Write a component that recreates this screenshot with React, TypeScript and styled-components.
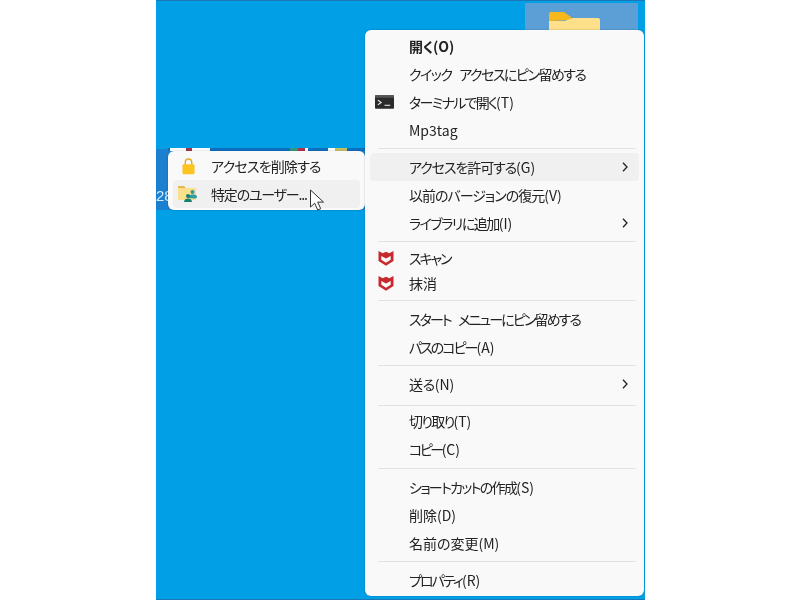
import React from "react";
import styled, { createGlobalStyle } from "styled-components";

const Global = createGlobalStyle`
  html, body { margin: 0; padding: 0; background: #fff; }
  body { font-family: "Noto Sans CJK JP", "Noto Sans", sans-serif; }
`;

const Page = styled.div`
  width: 800px;
  height: 600px;
  display: flex;
  justify-content: center;
  overflow: hidden;
  padding-left: 1px;
  box-sizing: border-box;
`;

const Desktop = styled.div`
  position: relative;
  width: 489px;
  height: 600px;
  background: #009fe6;
  border-top: 1px solid #1a78b8;
  border-bottom: 1px solid #1a78b8;
  box-sizing: border-box;
  display: flex;
  flex-direction: column;
  overflow: hidden;
  filter: blur(0.3px);
`;

const FolderTile = styled.div`
  align-self: flex-end;
  margin: 2px 7px 0 0;
  width: 113px;
  height: 30px;
  flex: none;
  background: #5c9fd6;
  display: flex;
  padding: 9px 0 0 24px;
  box-sizing: border-box;
`;

const Band = styled.div`
  margin-top: 116px;
  width: 210px;
  height: 61px;
  flex: none;
  background: #1b80cf;
  color: #d5ecff;
  font: 15px "Liberation Sans", sans-serif;
  display: flex;
  align-items: flex-end;
  padding: 0 0 6px 0;
  box-sizing: border-box;
`;

const Strip = styled.div`
  position: absolute;
  left: 12px;
  top: 147px;
  width: 197px;
  height: 3px;
  background: #0f6fc0;
  display: flex;
`;

const StripSeg = styled.span<{ $w: number; $c: string }>`
  width: ${(p) => p.$w}px;
  background: ${(p) => p.$c};
`;

const Menu = styled.div`
  position: absolute;
  background: #f9f9f9;
  border-radius: 6px;
  box-shadow: 0 0 2px rgba(0, 0, 0, 0.25);
  box-sizing: border-box;
  color: #222;
  font-size: 14px;
  font-feature-settings: "palt" 1;
  display: flex;
  flex-direction: column;
`;

const MainMenu = styled(Menu)`
  left: 209px;
  top: 29px;
  width: 279px;
  height: 566px;
  padding: 2px 5px;
`;

const SubMenu = styled(Menu)`
  left: 12px;
  top: 150px;
  width: 197px;
  height: 59px;
  padding: 1px 5px;
`;

const Row = styled.div<{ $h?: number; $active?: boolean; $bold?: boolean; $sub?: boolean; $track?: number; $word?: number }>`
  height: ${(p) => p.$h ?? 28}px;
  flex: none;
  display: flex;
  align-items: center;
  border-radius: 4px;
  padding-left: ${(p) => (p.$sub ? 38 : 39)}px;
  background: ${(p) => (p.$active ? "#f0f0f0" : "transparent")};
  font-weight: ${(p) => (p.$bold ? 700 : 400)};
  letter-spacing: ${(p) => p.$track ?? 0}px;
  word-spacing: ${(p) => p.$word ?? 0}px;
  white-space: pre;
`;

const Key = styled.span`
  letter-spacing: 0;
`;

const IconSlot = styled.span<{ $x?: number; $sub?: boolean }>`
  width: ${(p) => (p.$sub ? 34 : 35)}px;
  margin-left: ${(p) => (p.$sub ? -34 : -35)}px;
  flex: none;
  display: flex;
  align-items: center;
  padding-left: ${(p) => p.$x ?? 0}px;
  box-sizing: border-box;
`;

const Sep = styled.div<{ $top?: number; $bottom?: number }>`
  height: 1px;
  flex: none;
  margin: ${(p) => p.$top ?? 4}px 3px ${(p) => p.$bottom ?? 4}px 8px;
  background: #e2e2e2;
`;

const Chevron = styled.svg`
  margin-left: auto;
  margin-right: 11px;
  flex: none;
`;

const Cursor = styled.svg`
  position: absolute;
  left: 153px;
  top: 188px;
`;

const Folder = () => (
  <svg width="52" height="21" viewBox="0 0 52 21">
    <path d="M0 2a2 2 0 0 1 2-2h13l7 5v3l-22 1z" fill="#f6b81a" />
    <path d="M0 21V9h16l6-2.500 1-.5h26a2 2 0 0 1 2 2v13z" fill="#fee08b" />
  </svg>
);

const Terminal = () => (
  <svg width="19" height="14" viewBox="0 0 20 14">
    <rect width="20" height="14" rx="1" fill="#2b2b2b" />
    <rect width="20" height="2.500" fill="#555" />
    <path d="M3 5l3.500 2.500L3 10" fill="none" stroke="#eee" strokeWidth="1.200" />
    <path d="M10 10.500h6" stroke="#ddd" strokeWidth="1.200" />
  </svg>
);

const Shield = () => (
  <svg width="16" height="16" viewBox="0 0 16 16">
    <path
      fillRule="evenodd"
      d="M.5 1 4.800 3.200 8 1.800l3.200 1.400L15.500 1V11L8 15.700.5 11zM3.300 5.900V9.700L8 12.700l4.700-3V5.900L8 8.400z"
      fill="#c62a2f"
    />
  </svg>
);

const Lock = () => (
  <svg width="13" height="18" viewBox="0 0 14 18">
    <path d="M3.500 8V5a3.500 3.500 0 0 1 7 0v3" fill="none" stroke="#e0ad2a" strokeWidth="1.500" />
    <rect x="0.500" y="7" width="13" height="11" rx="1.500" fill="#fdc321" />
  </svg>
);

const ShareFolder = () => (
  <svg width="20" height="18" viewBox="0 0 20 18">
    <path d="M0 2a1 1 0 0 1 1-1h5l2 2h-8z" fill="#e9b649" />
    <path d="M0 3h17a1 1 0 0 1 1 1v11H1a1 1 0 0 1-1-1z" fill="#fadf8c" />
    <circle cx="14.500" cy="7" r="2" fill="#2d9ca6" />
    <path d="M10 13c0-2.500 2-3.500 4.500-3.500S19 10 19 12c0 1-1.500 1.500-3 1.500z" fill="#2d9ca6" />
    <circle cx="10" cy="11" r="2" fill="#17806f" />
    <path d="M6 17c0-2.500 2-3.500 4-3.500s4 1 4 3.500z" fill="#17806f" />
  </svg>
);

const Arrow = () => (
  <Chevron width="6" height="10" viewBox="0 0 6 10">
    <path d="M1 .8 5 5 1 9.200" fill="none" stroke="#222" strokeWidth="1.300" />
  </Chevron>
);

const segments = [
  { w: 2, c: "#0f6fc0" },
  { w: 16, c: "#ffffff" },
  { w: 6, c: "#a0344a" },
  { w: 18, c: "#ffffff" },
  { w: 80, c: "#0f6fc0" },
  { w: 8, c: "#2f9a80" },
  { w: 7, c: "#b5304a" },
  { w: 3, c: "#ffffff" },
  { w: 20, c: "#0f6fc0" },
  { w: 7, c: "#ffffff" },
  { w: 12, c: "#c8c060" },
  { w: 18, c: "#0f6fc0" },
];

export default function App() {
  return (
    <>
      <Global />
      <Page>
        <Desktop>
          <FolderTile>
            <Folder />
          </FolderTile>
          <Band>28</Band>
          <Strip>
            {segments.map((s, i) => (
              <StripSeg key={i} $w={s.w} $c={s.c} />
            ))}
          </Strip>
          <SubMenu>
            <Row $sub $track={-0.8}>
              <IconSlot $sub $x={5}><Lock /></IconSlot>
              <span>アクセスを削除する</span>
            </Row>
            <Row $sub $active $track={-1.2}>
              <IconSlot $sub $x={1}><ShareFolder /></IconSlot>
              <span>特定のユーザー...</span>
            </Row>
          </SubMenu>
          <MainMenu>
            <Row $bold $track={-0.2}><span>開く<Key>(O)</Key></span></Row>
            <Row $track={-1.5} $word={6}><span>クイック アクセスにピン留めする</span></Row>
            <Row $track={-1.7}>
              <IconSlot $x={1}><Terminal /></IconSlot>
              <span>ターミナルで開く<Key>(T)</Key></span>
            </Row>
            <Row>Mp3tag</Row>
            <Sep />
            <Row $active $track={-1.1}><span>アクセスを許可する<Key>(G)</Key></span><Arrow /></Row>
            <Row $track={-1}><span>以前のバージョンの復元<Key>(V)</Key></span></Row>
            <Row $track={-1.5}><span>ライブラリに追加<Key>(I)</Key></span><Arrow /></Row>
            <Sep $bottom={3} />
            <Row $h={25} $track={-2}>
              <IconSlot $x={4}><Shield /></IconSlot>
              <span>スキャン</span>
            </Row>
            <Row $h={25}>
              <IconSlot $x={4}><Shield /></IconSlot>
              <span>抹消</span>
            </Row>
            <Sep $top={5} $bottom={4} />
            <Row $track={-1.9} $word={6}><span>スタート メニューにピン留めする</span></Row>
            <Row $track={-2}><span>パスのコピー<Key>(A)</Key></span></Row>
            <Sep $top={4} $bottom={4} />
            <Row $track={-0.4}><span>送る<Key>(N)</Key></span><Arrow /></Row>
            <Sep $top={7} $bottom={1} />
            <Row $track={-1.7}><span>切り取り<Key>(T)</Key></span></Row>
            <Row $track={-2.5}><span>コピー<Key>(C)</Key></span></Row>
            <Sep $top={5} $bottom={4} />
            <Row $track={-1.7}><span>ショートカットの作成<Key>(S)</Key></span></Row>
            <Row><span>削除<Key>(D)</Key></span></Row>
            <Row><span>名前の変更<Key>(M)</Key></span></Row>
            <Sep $top={4} $bottom={4} />
            <Row $track={-1.9}><span>プロパティ<Key>(R)</Key></span></Row>
          </MainMenu>
          <Cursor width="18" height="24" viewBox="0 0 18 24">
            <path d="M1.500 1v17l4.200-3.800 3 6.800 3-1.300-3-6.600h5.800z" fill="#fff" stroke="#333" strokeWidth="1" />
          </Cursor>
        </Desktop>
      </Page>
    </>
  );
}
